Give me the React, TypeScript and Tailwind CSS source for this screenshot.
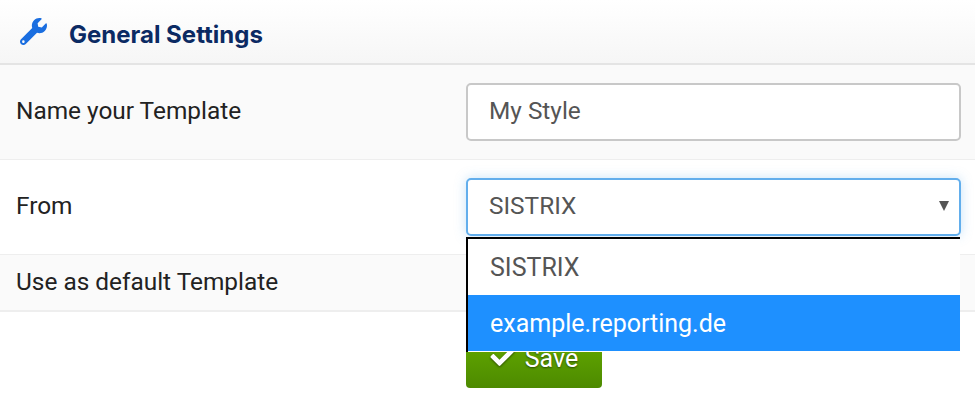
import { FaCheck } from 'react-icons/fa';

const Wrench = () => (
  <svg viewBox="0 0 512 512" className="h-[27px] w-[27px] text-[#1a6ee0]" fill="currentColor">
    <path d="M507.7 109.1c-2.2-9-13.5-12.1-20.1-5.5l-74.4 74.4-67.9-11.3-11.3-67.9 74.4-74.4c6.6-6.6 3.4-17.9-5.7-20.2-47.4-11.7-99.6.9-136.6 37.9-39.6 39.6-50.6 97.1-34 147.2L18.7 402.8c-25 25-25 65.5 0 90.5 25 25 65.5 25 90.5 0l213.2-213.2c50.2 16.7 107.6 5.7 147.4-34.1 37.1-37.1 49.7-89.3 37.9-136.9zM64 472c-13.2 0-24-10.8-24-24 0-13.3 10.7-24 24-24s24 10.7 24 24c0 13.2-10.7 24-24 24z" />
  </svg>
);

export default function App() {
  return (
    <div className="relative h-[404px] w-[975px] overflow-hidden bg-white font-['Roboto',sans-serif] text-[24.4px] text-[#222]">
      {/* Header */}
      <div className="flex h-[65px] items-center border-b-2 border-[#e4e4e4] bg-gradient-to-b from-white to-[#f6f6f6] pl-[20px]">
        <Wrench />
        <h2 className="ml-[22px] pt-[6px] font-['Inter',sans-serif] text-[24px] font-bold text-[#0b2a63]">General Settings</h2>
      </div>

      {/* Name */}
      <div className="flex h-[95px] items-center border-b border-[#eeeeee] bg-[#fafafa] pl-[16px]">
        <div className="w-[450px] pb-[2px]">Name your Template</div>
        <div className="flex h-[58px] w-[495px] items-center rounded-[5px] border-2 border-[#c8c8c8] bg-white pb-[2px] pl-[21px] text-[#555]">My Style</div>
      </div>

      {/* From */}
      <div className="flex h-[95px] items-center border-b border-[#eeeeee] bg-white pl-[16px]">
        <div className="w-[450px] pb-[2px]">From</div>
        <div className="relative flex h-[58px] w-[495px] items-center rounded-[5px] border-2 border-[#62aeec] bg-white pb-[2px] pl-[21px] text-[#555] shadow-[0_0_12px_rgba(98,174,236,0.35)]">
          SISTRIX
          <span className="absolute right-[10px] top-[21px] h-0 w-0 border-x-[5px] border-t-[10px] border-x-transparent border-t-[#555]" />
        </div>
      </div>

      {/* Default */}
      <div className="flex h-[57px] items-center border-b-2 border-[#eeeeee] bg-[#fafafa] pl-[16px]">
        Use as default Template
      </div>

      {/* Save */}
      <div className="mt-[28px] pl-[466px]">
        <button className="flex h-[48px] w-[136px] items-start justify-center gap-[10px] rounded-[4px] bg-gradient-to-b from-[#62a800] to-[#4d8a00] text-[25px] text-white [text-shadow:0_1px_2px_rgba(0,0,0,0.5)]">
          <FaCheck className="mt-[5px] h-[24px] w-[25px] drop-shadow-[0_1px_1px_rgba(0,0,0,0.5)]" />
          Save
        </button>
      </div>

      {/* Open dropdown list */}
      <div className="absolute left-[466px] top-[237px] h-[115px] w-[494px] border-l-2 border-t-2 border-black bg-white pb-px text-[25px]">
        <div className="flex h-[56px] items-center pl-[22px] pt-[1px] text-[#555]">SISTRIX</div>
        <div className="flex h-[56px] items-center bg-[#1e90ff] pl-[22px] pt-[2px] text-white">example.reporting.de</div>
      </div>
    </div>
  );
}
